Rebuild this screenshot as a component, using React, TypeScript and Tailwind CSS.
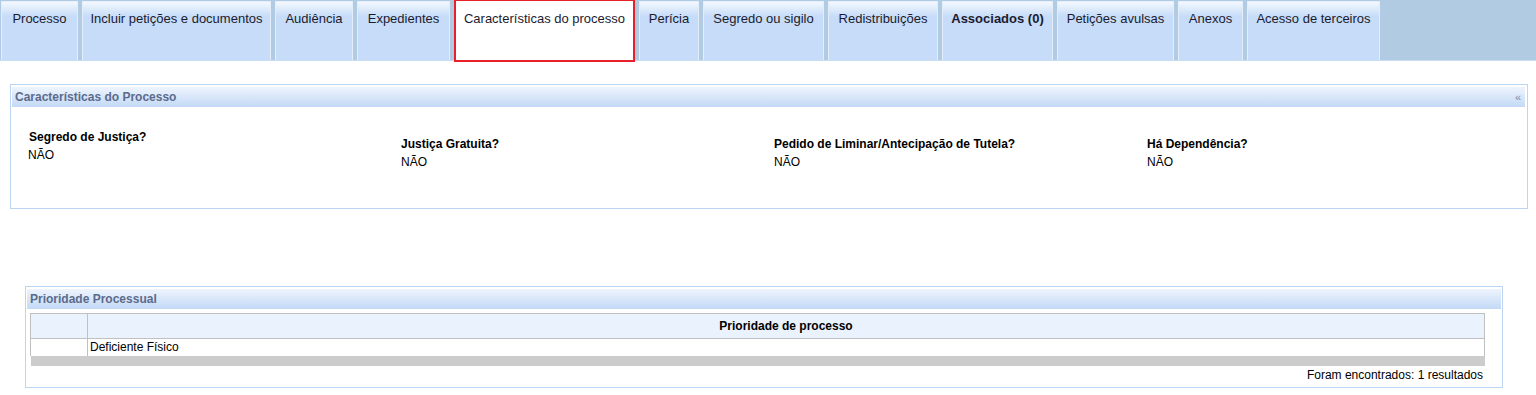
const tabs: Array<[string, number]> = [
  ['Processo', 77],
  ['Incluir petições e documentos', 189],
  ['Audiência', 78],
  ['Expedientes', 93],
  ['Características do processo', 181],
  ['Perícia', 60],
  ['Segredo ou sigilo', 121],
  ['Redistribuições', 110],
  ['Associados (0)', 111],
  ['Petições avulsas', 117],
  ['Anexos', 65],
  ['Acesso de terceiros', 133],
];

const fields: Array<[string, string]> = [
  ['Segredo de Justiça?', 'NÃO'],
  ['Justiça Gratuita?', 'NÃO'],
  ['Pedido de Liminar/Antecipação de Tutela?', 'NÃO'],
  ['Há Dependência?', 'NÃO'],
];

function Tab({ label, width }: Readonly<{ label: string; width: number }>) {
  const active = label === 'Características do processo';
  const bold = label === 'Associados (0)';
  if (active) {
    return (
      <div
        className="relative z-10 -mt-[1px] h-[63px] shrink-0 border-2 border-[#e8202a] bg-white pt-[8px] text-center text-[13px] whitespace-nowrap text-[#1b1b2f]"
        style={{ width }}
      >
        {label}
      </div>
    );
  }
  return (
    <div
      className={`mt-[1px] h-[59px] shrink-0 border-x border-t border-[#e4eefa] bg-gradient-to-b from-[#f3f8fe] via-[#c6dcf8] via-[25%] to-[#c6dcf8] pt-[7px] text-center text-[13px] whitespace-nowrap text-[#1b1b2f] ${bold ? 'font-bold' : ''}`}
      style={{ width }}
    >
      {label}
    </div>
  );
}

function PanelHeader({ title, collapse }: Readonly<{ title: string; collapse?: boolean }>) {
  return (
    <div className="flex h-[20px] items-center justify-between bg-gradient-to-b from-[#eef4fd] to-[#c3d9f6] px-[3px] text-[12px] font-bold text-[#5b6b8c]">
      <span>{title}</span>
      {collapse ? <span className="pr-[1px] text-[11px] font-normal text-[#7d8ca8]">«</span> : null}
    </div>
  );
}

export default function App() {
  return (
    <div className="min-h-[395px] bg-white font-['Liberation_Sans',Arial,sans-serif] text-black">
      <div className="flex h-[61px] gap-[4px] border-b border-[#c8ddf4] bg-[#b1cbe2] pl-[1px]">
        {tabs.map(([t, w]) => (
          <Tab key={t} label={t} width={w} />
        ))}
      </div>

      <section className="mx-[10px] mt-[23px] mr-[8px] border border-[#bcd5f2] p-[2px] pl-[1px] pb-0">
        <PanelHeader title="Características do Processo" collapse />
        <div className="flex h-[101px] pl-[16px] text-[12px]">
          {fields.map(([label, value], i) => (
            <div key={label} className={`w-[373px] ${i === 0 ? 'pt-[21px]' : 'pt-[28px]'}`}>
              <p className={`font-bold ${i === 0 ? 'pl-[1px]' : ''}`}>{label}</p>
              <p>{value}</p>
            </div>
          ))}
        </div>
      </section>

      <section className="mt-[77px] ml-[25px] mr-[33px] border border-[#bcd5f2] px-[1px] pt-[2px]">
        <PanelHeader title="Prioridade Processual" />
        <div className="mt-[4px] ml-[3px] mr-[16px]">
          <table className="w-full border-collapse text-[12px]">
            <thead>
              <tr className="h-[25px] bg-[#eaf2fd]">
                <th className="w-[57px] border border-[#c0c0c0]"></th>
                <th className="border border-[#c0c0c0] font-bold">Prioridade de processo</th>
              </tr>
            </thead>
            <tbody>
              <tr className="h-[17px]">
                <td className="border-l border-[#c0c0c0]"></td>
                <td className="border-x border-[#c0c0c0] px-[2px] leading-[15px]">Deficiente Físico</td>
              </tr>
              <tr className="h-[10px] bg-[#cccccc]">
                <td colSpan={2}></td>
              </tr>
            </tbody>
          </table>
          <p className="pr-[2px] pb-[3px] text-right text-[12px]">Foram encontrados: 1 resultados</p>
        </div>
      </section>
    </div>
  );
}
